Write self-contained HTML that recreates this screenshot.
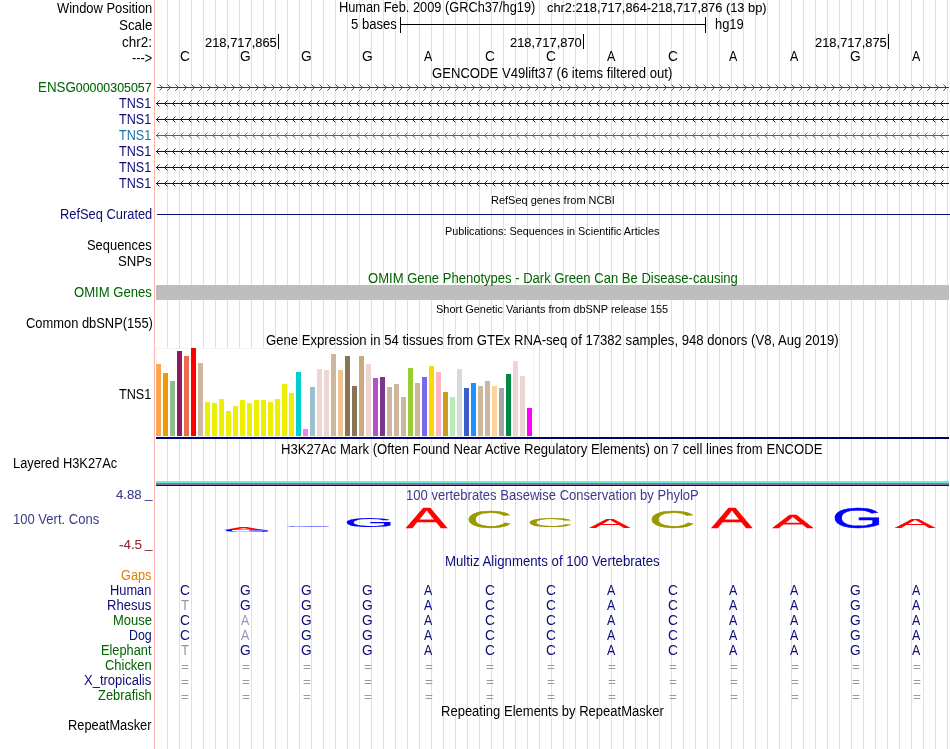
<!DOCTYPE html><html><head><meta charset="utf-8"><title>UCSC Genome Browser hg19 chr2:218,717,864-218,717,876</title><style>
html,body{margin:0;padding:0;background:#fff}
#w{will-change:transform;position:relative;width:950px;height:749px;overflow:hidden;background:#fff;font-family:"Liberation Sans", sans-serif;color:#000}
.t{position:absolute;white-space:pre;font-size:14px;line-height:14px;transform-origin:0 0}
.m{font-size:11px;line-height:11px}
.e{font-size:12px;line-height:12px}
.n{font-size:13px;line-height:13px;-webkit-text-stroke:0.09px}
.b{position:absolute}
</style></head><body><div id="w">
<div class="b" style="left:167px;top:0;width:783px;height:749px;background:repeating-linear-gradient(to right,#dcdcff 0,#dcdcff 1px,transparent 1px,transparent 12px)"></div>
<div class="b" style="left:154px;top:0;width:1px;height:749px;background:#ffb4b4"></div>
<div class="t" style="left:56.94px;top:1px;transform:scaleX(0.9208)">Window Position</div>
<div class="t" style="left:118.99px;top:18px;transform:scaleX(0.9537)">Scale</div>
<div class="t" style="left:122.33px;top:35px;transform:scaleX(0.9607)">chr2:</div>
<div class="t" style="left:131.54px;top:51px;transform:scaleX(0.9062)">---&gt;</div>
<div class="t" style="left:338.75px;top:0px;transform:scaleX(0.9137)">Human Feb. 2009 (GRCh37/hg19)</div>
<div class="t n" style="left:546.86px;top:1px;transform:scaleX(0.9862)">chr2:218,717,864-218,717,876 (13 bp)</div>
<div class="b" style="left:400px;top:24px;width:306px;height:1px;background:#000"></div>
<div class="b" style="left:400px;top:17px;width:1px;height:16px;background:#000"></div>
<div class="b" style="left:705px;top:17px;width:1px;height:16px;background:#000"></div>
<div class="t" style="left:350.68px;top:17px;transform:scaleX(0.9340)">5 bases</div>
<div class="t" style="left:714.81px;top:17px;transform:scaleX(0.9217)">hg19</div>
<div class="t n" style="left:204.55px;top:36px;transform:scaleX(0.9931)">218,717,865</div>
<div class="b" style="left:278px;top:34px;width:1px;height:15px;background:#000"></div>
<div class="t n" style="left:509.55px;top:36px;transform:scaleX(0.9925)">218,717,870</div>
<div class="b" style="left:583px;top:34px;width:1px;height:15px;background:#000"></div>
<div class="t n" style="left:814.55px;top:36px;transform:scaleX(0.9931)">218,717,875</div>
<div class="b" style="left:888px;top:34px;width:1px;height:15px;background:#000"></div>
<div class="t" style="left:179.56px;top:49px;transform:scaleX(0.9800)">C</div>
<div class="t" style="left:240.43px;top:49px;transform:scaleX(0.9800)">G</div>
<div class="t" style="left:301.43px;top:49px;transform:scaleX(0.9800)">G</div>
<div class="t" style="left:362.43px;top:49px;transform:scaleX(0.9800)">G</div>
<div class="t" style="left:424.44px;top:49px;transform:scaleX(0.8900)">A</div>
<div class="t" style="left:484.56px;top:49px;transform:scaleX(0.9800)">C</div>
<div class="t" style="left:545.56px;top:49px;transform:scaleX(0.9800)">C</div>
<div class="t" style="left:607.44px;top:49px;transform:scaleX(0.8900)">A</div>
<div class="t" style="left:667.56px;top:49px;transform:scaleX(0.9800)">C</div>
<div class="t" style="left:729.44px;top:49px;transform:scaleX(0.8900)">A</div>
<div class="t" style="left:790.44px;top:49px;transform:scaleX(0.8900)">A</div>
<div class="t" style="left:850.43px;top:49px;transform:scaleX(0.9800)">G</div>
<div class="t" style="left:912.44px;top:49px;transform:scaleX(0.8900)">A</div>
<div class="t" style="left:431.94px;top:66px;transform:scaleX(0.9362)">GENCODE V49lift37 (6 items filtered out)</div>
<div class="t" style="left:37.96px;top:80px;transform:scaleX(0.9527);color:#006400">ENSG<span class="n">00000305057</span></div>
<div class="b" style="left:157px;top:87px;width:792px;height:1px;background:#006400"></div>
<div class="t" style="left:118.72px;top:96px;transform:scaleX(0.8997);color:#0c0c78">TNS1</div>
<div class="b" style="left:156px;top:103px;width:793px;height:1px;background:#0c0c78"></div>
<div class="t" style="left:118.72px;top:112px;transform:scaleX(0.8997);color:#0c0c78">TNS1</div>
<div class="b" style="left:156px;top:119px;width:793px;height:1px;background:#0c0c78"></div>
<div class="t" style="left:118.72px;top:128px;transform:scaleX(0.8997);color:#1874ad">TNS1</div>
<div class="b" style="left:156px;top:135px;width:793px;height:1px;background:#1874ad"></div>
<div class="t" style="left:118.72px;top:144px;transform:scaleX(0.8997);color:#0c0c78">TNS1</div>
<div class="b" style="left:156px;top:151px;width:793px;height:1px;background:#0c0c78"></div>
<div class="t" style="left:118.72px;top:160px;transform:scaleX(0.8997);color:#0c0c78">TNS1</div>
<div class="b" style="left:156px;top:167px;width:793px;height:1px;background:#0c0c78"></div>
<div class="t" style="left:118.72px;top:176px;transform:scaleX(0.8997);color:#0c0c78">TNS1</div>
<div class="b" style="left:156px;top:183px;width:793px;height:1px;background:#0c0c78"></div>
<svg class="b" style="left:0;top:0" width="950" height="749" viewBox="0 0 950 749" fill="none" stroke-width="0.9"><path d="M159.5 84.5L162.5 87.5L159.5 90.5M167.5 84.5L170.5 87.5L167.5 90.5M175.5 84.5L178.5 87.5L175.5 90.5M183.5 84.5L186.5 87.5L183.5 90.5M191.5 84.5L194.5 87.5L191.5 90.5M199.5 84.5L202.5 87.5L199.5 90.5M207.5 84.5L210.5 87.5L207.5 90.5M215.5 84.5L218.5 87.5L215.5 90.5M223.5 84.5L226.5 87.5L223.5 90.5M231.5 84.5L234.5 87.5L231.5 90.5M239.5 84.5L242.5 87.5L239.5 90.5M247.5 84.5L250.5 87.5L247.5 90.5M255.5 84.5L258.5 87.5L255.5 90.5M263.5 84.5L266.5 87.5L263.5 90.5M271.5 84.5L274.5 87.5L271.5 90.5M279.5 84.5L282.5 87.5L279.5 90.5M287.5 84.5L290.5 87.5L287.5 90.5M295.5 84.5L298.5 87.5L295.5 90.5M303.5 84.5L306.5 87.5L303.5 90.5M311.5 84.5L314.5 87.5L311.5 90.5M319.5 84.5L322.5 87.5L319.5 90.5M327.5 84.5L330.5 87.5L327.5 90.5M335.5 84.5L338.5 87.5L335.5 90.5M343.5 84.5L346.5 87.5L343.5 90.5M351.5 84.5L354.5 87.5L351.5 90.5M359.5 84.5L362.5 87.5L359.5 90.5M367.5 84.5L370.5 87.5L367.5 90.5M375.5 84.5L378.5 87.5L375.5 90.5M383.5 84.5L386.5 87.5L383.5 90.5M391.5 84.5L394.5 87.5L391.5 90.5M399.5 84.5L402.5 87.5L399.5 90.5M407.5 84.5L410.5 87.5L407.5 90.5M415.5 84.5L418.5 87.5L415.5 90.5M423.5 84.5L426.5 87.5L423.5 90.5M431.5 84.5L434.5 87.5L431.5 90.5M439.5 84.5L442.5 87.5L439.5 90.5M447.5 84.5L450.5 87.5L447.5 90.5M455.5 84.5L458.5 87.5L455.5 90.5M463.5 84.5L466.5 87.5L463.5 90.5M471.5 84.5L474.5 87.5L471.5 90.5M479.5 84.5L482.5 87.5L479.5 90.5M487.5 84.5L490.5 87.5L487.5 90.5M495.5 84.5L498.5 87.5L495.5 90.5M503.5 84.5L506.5 87.5L503.5 90.5M511.5 84.5L514.5 87.5L511.5 90.5M519.5 84.5L522.5 87.5L519.5 90.5M527.5 84.5L530.5 87.5L527.5 90.5M535.5 84.5L538.5 87.5L535.5 90.5M543.5 84.5L546.5 87.5L543.5 90.5M551.5 84.5L554.5 87.5L551.5 90.5M559.5 84.5L562.5 87.5L559.5 90.5M567.5 84.5L570.5 87.5L567.5 90.5M575.5 84.5L578.5 87.5L575.5 90.5M583.5 84.5L586.5 87.5L583.5 90.5M591.5 84.5L594.5 87.5L591.5 90.5M599.5 84.5L602.5 87.5L599.5 90.5M607.5 84.5L610.5 87.5L607.5 90.5M615.5 84.5L618.5 87.5L615.5 90.5M623.5 84.5L626.5 87.5L623.5 90.5M631.5 84.5L634.5 87.5L631.5 90.5M639.5 84.5L642.5 87.5L639.5 90.5M647.5 84.5L650.5 87.5L647.5 90.5M655.5 84.5L658.5 87.5L655.5 90.5M663.5 84.5L666.5 87.5L663.5 90.5M671.5 84.5L674.5 87.5L671.5 90.5M679.5 84.5L682.5 87.5L679.5 90.5M687.5 84.5L690.5 87.5L687.5 90.5M695.5 84.5L698.5 87.5L695.5 90.5M703.5 84.5L706.5 87.5L703.5 90.5M711.5 84.5L714.5 87.5L711.5 90.5M719.5 84.5L722.5 87.5L719.5 90.5M727.5 84.5L730.5 87.5L727.5 90.5M735.5 84.5L738.5 87.5L735.5 90.5M743.5 84.5L746.5 87.5L743.5 90.5M751.5 84.5L754.5 87.5L751.5 90.5M759.5 84.5L762.5 87.5L759.5 90.5M767.5 84.5L770.5 87.5L767.5 90.5M775.5 84.5L778.5 87.5L775.5 90.5M783.5 84.5L786.5 87.5L783.5 90.5M791.5 84.5L794.5 87.5L791.5 90.5M799.5 84.5L802.5 87.5L799.5 90.5M807.5 84.5L810.5 87.5L807.5 90.5M815.5 84.5L818.5 87.5L815.5 90.5M823.5 84.5L826.5 87.5L823.5 90.5M831.5 84.5L834.5 87.5L831.5 90.5M839.5 84.5L842.5 87.5L839.5 90.5M847.5 84.5L850.5 87.5L847.5 90.5M855.5 84.5L858.5 87.5L855.5 90.5M863.5 84.5L866.5 87.5L863.5 90.5M871.5 84.5L874.5 87.5L871.5 90.5M879.5 84.5L882.5 87.5L879.5 90.5M887.5 84.5L890.5 87.5L887.5 90.5M895.5 84.5L898.5 87.5L895.5 90.5M903.5 84.5L906.5 87.5L903.5 90.5M911.5 84.5L914.5 87.5L911.5 90.5M919.5 84.5L922.5 87.5L919.5 90.5M927.5 84.5L930.5 87.5L927.5 90.5M935.5 84.5L938.5 87.5L935.5 90.5M943.5 84.5L946.5 87.5L943.5 90.5" stroke="#006400"/><path d="M159.5 100.5L156.5 103.5L159.5 106.5M167.5 100.5L164.5 103.5L167.5 106.5M175.5 100.5L172.5 103.5L175.5 106.5M183.5 100.5L180.5 103.5L183.5 106.5M191.5 100.5L188.5 103.5L191.5 106.5M199.5 100.5L196.5 103.5L199.5 106.5M207.5 100.5L204.5 103.5L207.5 106.5M215.5 100.5L212.5 103.5L215.5 106.5M223.5 100.5L220.5 103.5L223.5 106.5M231.5 100.5L228.5 103.5L231.5 106.5M239.5 100.5L236.5 103.5L239.5 106.5M247.5 100.5L244.5 103.5L247.5 106.5M255.5 100.5L252.5 103.5L255.5 106.5M263.5 100.5L260.5 103.5L263.5 106.5M271.5 100.5L268.5 103.5L271.5 106.5M279.5 100.5L276.5 103.5L279.5 106.5M287.5 100.5L284.5 103.5L287.5 106.5M295.5 100.5L292.5 103.5L295.5 106.5M303.5 100.5L300.5 103.5L303.5 106.5M311.5 100.5L308.5 103.5L311.5 106.5M319.5 100.5L316.5 103.5L319.5 106.5M327.5 100.5L324.5 103.5L327.5 106.5M335.5 100.5L332.5 103.5L335.5 106.5M343.5 100.5L340.5 103.5L343.5 106.5M351.5 100.5L348.5 103.5L351.5 106.5M359.5 100.5L356.5 103.5L359.5 106.5M367.5 100.5L364.5 103.5L367.5 106.5M375.5 100.5L372.5 103.5L375.5 106.5M383.5 100.5L380.5 103.5L383.5 106.5M391.5 100.5L388.5 103.5L391.5 106.5M399.5 100.5L396.5 103.5L399.5 106.5M407.5 100.5L404.5 103.5L407.5 106.5M415.5 100.5L412.5 103.5L415.5 106.5M423.5 100.5L420.5 103.5L423.5 106.5M431.5 100.5L428.5 103.5L431.5 106.5M439.5 100.5L436.5 103.5L439.5 106.5M447.5 100.5L444.5 103.5L447.5 106.5M455.5 100.5L452.5 103.5L455.5 106.5M463.5 100.5L460.5 103.5L463.5 106.5M471.5 100.5L468.5 103.5L471.5 106.5M479.5 100.5L476.5 103.5L479.5 106.5M487.5 100.5L484.5 103.5L487.5 106.5M495.5 100.5L492.5 103.5L495.5 106.5M503.5 100.5L500.5 103.5L503.5 106.5M511.5 100.5L508.5 103.5L511.5 106.5M519.5 100.5L516.5 103.5L519.5 106.5M527.5 100.5L524.5 103.5L527.5 106.5M535.5 100.5L532.5 103.5L535.5 106.5M543.5 100.5L540.5 103.5L543.5 106.5M551.5 100.5L548.5 103.5L551.5 106.5M559.5 100.5L556.5 103.5L559.5 106.5M567.5 100.5L564.5 103.5L567.5 106.5M575.5 100.5L572.5 103.5L575.5 106.5M583.5 100.5L580.5 103.5L583.5 106.5M591.5 100.5L588.5 103.5L591.5 106.5M599.5 100.5L596.5 103.5L599.5 106.5M607.5 100.5L604.5 103.5L607.5 106.5M615.5 100.5L612.5 103.5L615.5 106.5M623.5 100.5L620.5 103.5L623.5 106.5M631.5 100.5L628.5 103.5L631.5 106.5M639.5 100.5L636.5 103.5L639.5 106.5M647.5 100.5L644.5 103.5L647.5 106.5M655.5 100.5L652.5 103.5L655.5 106.5M663.5 100.5L660.5 103.5L663.5 106.5M671.5 100.5L668.5 103.5L671.5 106.5M679.5 100.5L676.5 103.5L679.5 106.5M687.5 100.5L684.5 103.5L687.5 106.5M695.5 100.5L692.5 103.5L695.5 106.5M703.5 100.5L700.5 103.5L703.5 106.5M711.5 100.5L708.5 103.5L711.5 106.5M719.5 100.5L716.5 103.5L719.5 106.5M727.5 100.5L724.5 103.5L727.5 106.5M735.5 100.5L732.5 103.5L735.5 106.5M743.5 100.5L740.5 103.5L743.5 106.5M751.5 100.5L748.5 103.5L751.5 106.5M759.5 100.5L756.5 103.5L759.5 106.5M767.5 100.5L764.5 103.5L767.5 106.5M775.5 100.5L772.5 103.5L775.5 106.5M783.5 100.5L780.5 103.5L783.5 106.5M791.5 100.5L788.5 103.5L791.5 106.5M799.5 100.5L796.5 103.5L799.5 106.5M807.5 100.5L804.5 103.5L807.5 106.5M815.5 100.5L812.5 103.5L815.5 106.5M823.5 100.5L820.5 103.5L823.5 106.5M831.5 100.5L828.5 103.5L831.5 106.5M839.5 100.5L836.5 103.5L839.5 106.5M847.5 100.5L844.5 103.5L847.5 106.5M855.5 100.5L852.5 103.5L855.5 106.5M863.5 100.5L860.5 103.5L863.5 106.5M871.5 100.5L868.5 103.5L871.5 106.5M879.5 100.5L876.5 103.5L879.5 106.5M887.5 100.5L884.5 103.5L887.5 106.5M895.5 100.5L892.5 103.5L895.5 106.5M903.5 100.5L900.5 103.5L903.5 106.5M911.5 100.5L908.5 103.5L911.5 106.5M919.5 100.5L916.5 103.5L919.5 106.5M927.5 100.5L924.5 103.5L927.5 106.5M935.5 100.5L932.5 103.5L935.5 106.5M943.5 100.5L940.5 103.5L943.5 106.5" stroke="#0c0c78"/><path d="M159.5 116.5L156.5 119.5L159.5 122.5M167.5 116.5L164.5 119.5L167.5 122.5M175.5 116.5L172.5 119.5L175.5 122.5M183.5 116.5L180.5 119.5L183.5 122.5M191.5 116.5L188.5 119.5L191.5 122.5M199.5 116.5L196.5 119.5L199.5 122.5M207.5 116.5L204.5 119.5L207.5 122.5M215.5 116.5L212.5 119.5L215.5 122.5M223.5 116.5L220.5 119.5L223.5 122.5M231.5 116.5L228.5 119.5L231.5 122.5M239.5 116.5L236.5 119.5L239.5 122.5M247.5 116.5L244.5 119.5L247.5 122.5M255.5 116.5L252.5 119.5L255.5 122.5M263.5 116.5L260.5 119.5L263.5 122.5M271.5 116.5L268.5 119.5L271.5 122.5M279.5 116.5L276.5 119.5L279.5 122.5M287.5 116.5L284.5 119.5L287.5 122.5M295.5 116.5L292.5 119.5L295.5 122.5M303.5 116.5L300.5 119.5L303.5 122.5M311.5 116.5L308.5 119.5L311.5 122.5M319.5 116.5L316.5 119.5L319.5 122.5M327.5 116.5L324.5 119.5L327.5 122.5M335.5 116.5L332.5 119.5L335.5 122.5M343.5 116.5L340.5 119.5L343.5 122.5M351.5 116.5L348.5 119.5L351.5 122.5M359.5 116.5L356.5 119.5L359.5 122.5M367.5 116.5L364.5 119.5L367.5 122.5M375.5 116.5L372.5 119.5L375.5 122.5M383.5 116.5L380.5 119.5L383.5 122.5M391.5 116.5L388.5 119.5L391.5 122.5M399.5 116.5L396.5 119.5L399.5 122.5M407.5 116.5L404.5 119.5L407.5 122.5M415.5 116.5L412.5 119.5L415.5 122.5M423.5 116.5L420.5 119.5L423.5 122.5M431.5 116.5L428.5 119.5L431.5 122.5M439.5 116.5L436.5 119.5L439.5 122.5M447.5 116.5L444.5 119.5L447.5 122.5M455.5 116.5L452.5 119.5L455.5 122.5M463.5 116.5L460.5 119.5L463.5 122.5M471.5 116.5L468.5 119.5L471.5 122.5M479.5 116.5L476.5 119.5L479.5 122.5M487.5 116.5L484.5 119.5L487.5 122.5M495.5 116.5L492.5 119.5L495.5 122.5M503.5 116.5L500.5 119.5L503.5 122.5M511.5 116.5L508.5 119.5L511.5 122.5M519.5 116.5L516.5 119.5L519.5 122.5M527.5 116.5L524.5 119.5L527.5 122.5M535.5 116.5L532.5 119.5L535.5 122.5M543.5 116.5L540.5 119.5L543.5 122.5M551.5 116.5L548.5 119.5L551.5 122.5M559.5 116.5L556.5 119.5L559.5 122.5M567.5 116.5L564.5 119.5L567.5 122.5M575.5 116.5L572.5 119.5L575.5 122.5M583.5 116.5L580.5 119.5L583.5 122.5M591.5 116.5L588.5 119.5L591.5 122.5M599.5 116.5L596.5 119.5L599.5 122.5M607.5 116.5L604.5 119.5L607.5 122.5M615.5 116.5L612.5 119.5L615.5 122.5M623.5 116.5L620.5 119.5L623.5 122.5M631.5 116.5L628.5 119.5L631.5 122.5M639.5 116.5L636.5 119.5L639.5 122.5M647.5 116.5L644.5 119.5L647.5 122.5M655.5 116.5L652.5 119.5L655.5 122.5M663.5 116.5L660.5 119.5L663.5 122.5M671.5 116.5L668.5 119.5L671.5 122.5M679.5 116.5L676.5 119.5L679.5 122.5M687.5 116.5L684.5 119.5L687.5 122.5M695.5 116.5L692.5 119.5L695.5 122.5M703.5 116.5L700.5 119.5L703.5 122.5M711.5 116.5L708.5 119.5L711.5 122.5M719.5 116.5L716.5 119.5L719.5 122.5M727.5 116.5L724.5 119.5L727.5 122.5M735.5 116.5L732.5 119.5L735.5 122.5M743.5 116.5L740.5 119.5L743.5 122.5M751.5 116.5L748.5 119.5L751.5 122.5M759.5 116.5L756.5 119.5L759.5 122.5M767.5 116.5L764.5 119.5L767.5 122.5M775.5 116.5L772.5 119.5L775.5 122.5M783.5 116.5L780.5 119.5L783.5 122.5M791.5 116.5L788.5 119.5L791.5 122.5M799.5 116.5L796.5 119.5L799.5 122.5M807.5 116.5L804.5 119.5L807.5 122.5M815.5 116.5L812.5 119.5L815.5 122.5M823.5 116.5L820.5 119.5L823.5 122.5M831.5 116.5L828.5 119.5L831.5 122.5M839.5 116.5L836.5 119.5L839.5 122.5M847.5 116.5L844.5 119.5L847.5 122.5M855.5 116.5L852.5 119.5L855.5 122.5M863.5 116.5L860.5 119.5L863.5 122.5M871.5 116.5L868.5 119.5L871.5 122.5M879.5 116.5L876.5 119.5L879.5 122.5M887.5 116.5L884.5 119.5L887.5 122.5M895.5 116.5L892.5 119.5L895.5 122.5M903.5 116.5L900.5 119.5L903.5 122.5M911.5 116.5L908.5 119.5L911.5 122.5M919.5 116.5L916.5 119.5L919.5 122.5M927.5 116.5L924.5 119.5L927.5 122.5M935.5 116.5L932.5 119.5L935.5 122.5M943.5 116.5L940.5 119.5L943.5 122.5" stroke="#0c0c78"/><path d="M159.5 132.5L156.5 135.5L159.5 138.5M167.5 132.5L164.5 135.5L167.5 138.5M175.5 132.5L172.5 135.5L175.5 138.5M183.5 132.5L180.5 135.5L183.5 138.5M191.5 132.5L188.5 135.5L191.5 138.5M199.5 132.5L196.5 135.5L199.5 138.5M207.5 132.5L204.5 135.5L207.5 138.5M215.5 132.5L212.5 135.5L215.5 138.5M223.5 132.5L220.5 135.5L223.5 138.5M231.5 132.5L228.5 135.5L231.5 138.5M239.5 132.5L236.5 135.5L239.5 138.5M247.5 132.5L244.5 135.5L247.5 138.5M255.5 132.5L252.5 135.5L255.5 138.5M263.5 132.5L260.5 135.5L263.5 138.5M271.5 132.5L268.5 135.5L271.5 138.5M279.5 132.5L276.5 135.5L279.5 138.5M287.5 132.5L284.5 135.5L287.5 138.5M295.5 132.5L292.5 135.5L295.5 138.5M303.5 132.5L300.5 135.5L303.5 138.5M311.5 132.5L308.5 135.5L311.5 138.5M319.5 132.5L316.5 135.5L319.5 138.5M327.5 132.5L324.5 135.5L327.5 138.5M335.5 132.5L332.5 135.5L335.5 138.5M343.5 132.5L340.5 135.5L343.5 138.5M351.5 132.5L348.5 135.5L351.5 138.5M359.5 132.5L356.5 135.5L359.5 138.5M367.5 132.5L364.5 135.5L367.5 138.5M375.5 132.5L372.5 135.5L375.5 138.5M383.5 132.5L380.5 135.5L383.5 138.5M391.5 132.5L388.5 135.5L391.5 138.5M399.5 132.5L396.5 135.5L399.5 138.5M407.5 132.5L404.5 135.5L407.5 138.5M415.5 132.5L412.5 135.5L415.5 138.5M423.5 132.5L420.5 135.5L423.5 138.5M431.5 132.5L428.5 135.5L431.5 138.5M439.5 132.5L436.5 135.5L439.5 138.5M447.5 132.5L444.5 135.5L447.5 138.5M455.5 132.5L452.5 135.5L455.5 138.5M463.5 132.5L460.5 135.5L463.5 138.5M471.5 132.5L468.5 135.5L471.5 138.5M479.5 132.5L476.5 135.5L479.5 138.5M487.5 132.5L484.5 135.5L487.5 138.5M495.5 132.5L492.5 135.5L495.5 138.5M503.5 132.5L500.5 135.5L503.5 138.5M511.5 132.5L508.5 135.5L511.5 138.5M519.5 132.5L516.5 135.5L519.5 138.5M527.5 132.5L524.5 135.5L527.5 138.5M535.5 132.5L532.5 135.5L535.5 138.5M543.5 132.5L540.5 135.5L543.5 138.5M551.5 132.5L548.5 135.5L551.5 138.5M559.5 132.5L556.5 135.5L559.5 138.5M567.5 132.5L564.5 135.5L567.5 138.5M575.5 132.5L572.5 135.5L575.5 138.5M583.5 132.5L580.5 135.5L583.5 138.5M591.5 132.5L588.5 135.5L591.5 138.5M599.5 132.5L596.5 135.5L599.5 138.5M607.5 132.5L604.5 135.5L607.5 138.5M615.5 132.5L612.5 135.5L615.5 138.5M623.5 132.5L620.5 135.5L623.5 138.5M631.5 132.5L628.5 135.5L631.5 138.5M639.5 132.5L636.5 135.5L639.5 138.5M647.5 132.5L644.5 135.5L647.5 138.5M655.5 132.5L652.5 135.5L655.5 138.5M663.5 132.5L660.5 135.5L663.5 138.5M671.5 132.5L668.5 135.5L671.5 138.5M679.5 132.5L676.5 135.5L679.5 138.5M687.5 132.5L684.5 135.5L687.5 138.5M695.5 132.5L692.5 135.5L695.5 138.5M703.5 132.5L700.5 135.5L703.5 138.5M711.5 132.5L708.5 135.5L711.5 138.5M719.5 132.5L716.5 135.5L719.5 138.5M727.5 132.5L724.5 135.5L727.5 138.5M735.5 132.5L732.5 135.5L735.5 138.5M743.5 132.5L740.5 135.5L743.5 138.5M751.5 132.5L748.5 135.5L751.5 138.5M759.5 132.5L756.5 135.5L759.5 138.5M767.5 132.5L764.5 135.5L767.5 138.5M775.5 132.5L772.5 135.5L775.5 138.5M783.5 132.5L780.5 135.5L783.5 138.5M791.5 132.5L788.5 135.5L791.5 138.5M799.5 132.5L796.5 135.5L799.5 138.5M807.5 132.5L804.5 135.5L807.5 138.5M815.5 132.5L812.5 135.5L815.5 138.5M823.5 132.5L820.5 135.5L823.5 138.5M831.5 132.5L828.5 135.5L831.5 138.5M839.5 132.5L836.5 135.5L839.5 138.5M847.5 132.5L844.5 135.5L847.5 138.5M855.5 132.5L852.5 135.5L855.5 138.5M863.5 132.5L860.5 135.5L863.5 138.5M871.5 132.5L868.5 135.5L871.5 138.5M879.5 132.5L876.5 135.5L879.5 138.5M887.5 132.5L884.5 135.5L887.5 138.5M895.5 132.5L892.5 135.5L895.5 138.5M903.5 132.5L900.5 135.5L903.5 138.5M911.5 132.5L908.5 135.5L911.5 138.5M919.5 132.5L916.5 135.5L919.5 138.5M927.5 132.5L924.5 135.5L927.5 138.5M935.5 132.5L932.5 135.5L935.5 138.5M943.5 132.5L940.5 135.5L943.5 138.5" stroke="#1874ad"/><path d="M159.5 148.5L156.5 151.5L159.5 154.5M167.5 148.5L164.5 151.5L167.5 154.5M175.5 148.5L172.5 151.5L175.5 154.5M183.5 148.5L180.5 151.5L183.5 154.5M191.5 148.5L188.5 151.5L191.5 154.5M199.5 148.5L196.5 151.5L199.5 154.5M207.5 148.5L204.5 151.5L207.5 154.5M215.5 148.5L212.5 151.5L215.5 154.5M223.5 148.5L220.5 151.5L223.5 154.5M231.5 148.5L228.5 151.5L231.5 154.5M239.5 148.5L236.5 151.5L239.5 154.5M247.5 148.5L244.5 151.5L247.5 154.5M255.5 148.5L252.5 151.5L255.5 154.5M263.5 148.5L260.5 151.5L263.5 154.5M271.5 148.5L268.5 151.5L271.5 154.5M279.5 148.5L276.5 151.5L279.5 154.5M287.5 148.5L284.5 151.5L287.5 154.5M295.5 148.5L292.5 151.5L295.5 154.5M303.5 148.5L300.5 151.5L303.5 154.5M311.5 148.5L308.5 151.5L311.5 154.5M319.5 148.5L316.5 151.5L319.5 154.5M327.5 148.5L324.5 151.5L327.5 154.5M335.5 148.5L332.5 151.5L335.5 154.5M343.5 148.5L340.5 151.5L343.5 154.5M351.5 148.5L348.5 151.5L351.5 154.5M359.5 148.5L356.5 151.5L359.5 154.5M367.5 148.5L364.5 151.5L367.5 154.5M375.5 148.5L372.5 151.5L375.5 154.5M383.5 148.5L380.5 151.5L383.5 154.5M391.5 148.5L388.5 151.5L391.5 154.5M399.5 148.5L396.5 151.5L399.5 154.5M407.5 148.5L404.5 151.5L407.5 154.5M415.5 148.5L412.5 151.5L415.5 154.5M423.5 148.5L420.5 151.5L423.5 154.5M431.5 148.5L428.5 151.5L431.5 154.5M439.5 148.5L436.5 151.5L439.5 154.5M447.5 148.5L444.5 151.5L447.5 154.5M455.5 148.5L452.5 151.5L455.5 154.5M463.5 148.5L460.5 151.5L463.5 154.5M471.5 148.5L468.5 151.5L471.5 154.5M479.5 148.5L476.5 151.5L479.5 154.5M487.5 148.5L484.5 151.5L487.5 154.5M495.5 148.5L492.5 151.5L495.5 154.5M503.5 148.5L500.5 151.5L503.5 154.5M511.5 148.5L508.5 151.5L511.5 154.5M519.5 148.5L516.5 151.5L519.5 154.5M527.5 148.5L524.5 151.5L527.5 154.5M535.5 148.5L532.5 151.5L535.5 154.5M543.5 148.5L540.5 151.5L543.5 154.5M551.5 148.5L548.5 151.5L551.5 154.5M559.5 148.5L556.5 151.5L559.5 154.5M567.5 148.5L564.5 151.5L567.5 154.5M575.5 148.5L572.5 151.5L575.5 154.5M583.5 148.5L580.5 151.5L583.5 154.5M591.5 148.5L588.5 151.5L591.5 154.5M599.5 148.5L596.5 151.5L599.5 154.5M607.5 148.5L604.5 151.5L607.5 154.5M615.5 148.5L612.5 151.5L615.5 154.5M623.5 148.5L620.5 151.5L623.5 154.5M631.5 148.5L628.5 151.5L631.5 154.5M639.5 148.5L636.5 151.5L639.5 154.5M647.5 148.5L644.5 151.5L647.5 154.5M655.5 148.5L652.5 151.5L655.5 154.5M663.5 148.5L660.5 151.5L663.5 154.5M671.5 148.5L668.5 151.5L671.5 154.5M679.5 148.5L676.5 151.5L679.5 154.5M687.5 148.5L684.5 151.5L687.5 154.5M695.5 148.5L692.5 151.5L695.5 154.5M703.5 148.5L700.5 151.5L703.5 154.5M711.5 148.5L708.5 151.5L711.5 154.5M719.5 148.5L716.5 151.5L719.5 154.5M727.5 148.5L724.5 151.5L727.5 154.5M735.5 148.5L732.5 151.5L735.5 154.5M743.5 148.5L740.5 151.5L743.5 154.5M751.5 148.5L748.5 151.5L751.5 154.5M759.5 148.5L756.5 151.5L759.5 154.5M767.5 148.5L764.5 151.5L767.5 154.5M775.5 148.5L772.5 151.5L775.5 154.5M783.5 148.5L780.5 151.5L783.5 154.5M791.5 148.5L788.5 151.5L791.5 154.5M799.5 148.5L796.5 151.5L799.5 154.5M807.5 148.5L804.5 151.5L807.5 154.5M815.5 148.5L812.5 151.5L815.5 154.5M823.5 148.5L820.5 151.5L823.5 154.5M831.5 148.5L828.5 151.5L831.5 154.5M839.5 148.5L836.5 151.5L839.5 154.5M847.5 148.5L844.5 151.5L847.5 154.5M855.5 148.5L852.5 151.5L855.5 154.5M863.5 148.5L860.5 151.5L863.5 154.5M871.5 148.5L868.5 151.5L871.5 154.5M879.5 148.5L876.5 151.5L879.5 154.5M887.5 148.5L884.5 151.5L887.5 154.5M895.5 148.5L892.5 151.5L895.5 154.5M903.5 148.5L900.5 151.5L903.5 154.5M911.5 148.5L908.5 151.5L911.5 154.5M919.5 148.5L916.5 151.5L919.5 154.5M927.5 148.5L924.5 151.5L927.5 154.5M935.5 148.5L932.5 151.5L935.5 154.5M943.5 148.5L940.5 151.5L943.5 154.5" stroke="#0c0c78"/><path d="M159.5 164.5L156.5 167.5L159.5 170.5M167.5 164.5L164.5 167.5L167.5 170.5M175.5 164.5L172.5 167.5L175.5 170.5M183.5 164.5L180.5 167.5L183.5 170.5M191.5 164.5L188.5 167.5L191.5 170.5M199.5 164.5L196.5 167.5L199.5 170.5M207.5 164.5L204.5 167.5L207.5 170.5M215.5 164.5L212.5 167.5L215.5 170.5M223.5 164.5L220.5 167.5L223.5 170.5M231.5 164.5L228.5 167.5L231.5 170.5M239.5 164.5L236.5 167.5L239.5 170.5M247.5 164.5L244.5 167.5L247.5 170.5M255.5 164.5L252.5 167.5L255.5 170.5M263.5 164.5L260.5 167.5L263.5 170.5M271.5 164.5L268.5 167.5L271.5 170.5M279.5 164.5L276.5 167.5L279.5 170.5M287.5 164.5L284.5 167.5L287.5 170.5M295.5 164.5L292.5 167.5L295.5 170.5M303.5 164.5L300.5 167.5L303.5 170.5M311.5 164.5L308.5 167.5L311.5 170.5M319.5 164.5L316.5 167.5L319.5 170.5M327.5 164.5L324.5 167.5L327.5 170.5M335.5 164.5L332.5 167.5L335.5 170.5M343.5 164.5L340.5 167.5L343.5 170.5M351.5 164.5L348.5 167.5L351.5 170.5M359.5 164.5L356.5 167.5L359.5 170.5M367.5 164.5L364.5 167.5L367.5 170.5M375.5 164.5L372.5 167.5L375.5 170.5M383.5 164.5L380.5 167.5L383.5 170.5M391.5 164.5L388.5 167.5L391.5 170.5M399.5 164.5L396.5 167.5L399.5 170.5M407.5 164.5L404.5 167.5L407.5 170.5M415.5 164.5L412.5 167.5L415.5 170.5M423.5 164.5L420.5 167.5L423.5 170.5M431.5 164.5L428.5 167.5L431.5 170.5M439.5 164.5L436.5 167.5L439.5 170.5M447.5 164.5L444.5 167.5L447.5 170.5M455.5 164.5L452.5 167.5L455.5 170.5M463.5 164.5L460.5 167.5L463.5 170.5M471.5 164.5L468.5 167.5L471.5 170.5M479.5 164.5L476.5 167.5L479.5 170.5M487.5 164.5L484.5 167.5L487.5 170.5M495.5 164.5L492.5 167.5L495.5 170.5M503.5 164.5L500.5 167.5L503.5 170.5M511.5 164.5L508.5 167.5L511.5 170.5M519.5 164.5L516.5 167.5L519.5 170.5M527.5 164.5L524.5 167.5L527.5 170.5M535.5 164.5L532.5 167.5L535.5 170.5M543.5 164.5L540.5 167.5L543.5 170.5M551.5 164.5L548.5 167.5L551.5 170.5M559.5 164.5L556.5 167.5L559.5 170.5M567.5 164.5L564.5 167.5L567.5 170.5M575.5 164.5L572.5 167.5L575.5 170.5M583.5 164.5L580.5 167.5L583.5 170.5M591.5 164.5L588.5 167.5L591.5 170.5M599.5 164.5L596.5 167.5L599.5 170.5M607.5 164.5L604.5 167.5L607.5 170.5M615.5 164.5L612.5 167.5L615.5 170.5M623.5 164.5L620.5 167.5L623.5 170.5M631.5 164.5L628.5 167.5L631.5 170.5M639.5 164.5L636.5 167.5L639.5 170.5M647.5 164.5L644.5 167.5L647.5 170.5M655.5 164.5L652.5 167.5L655.5 170.5M663.5 164.5L660.5 167.5L663.5 170.5M671.5 164.5L668.5 167.5L671.5 170.5M679.5 164.5L676.5 167.5L679.5 170.5M687.5 164.5L684.5 167.5L687.5 170.5M695.5 164.5L692.5 167.5L695.5 170.5M703.5 164.5L700.5 167.5L703.5 170.5M711.5 164.5L708.5 167.5L711.5 170.5M719.5 164.5L716.5 167.5L719.5 170.5M727.5 164.5L724.5 167.5L727.5 170.5M735.5 164.5L732.5 167.5L735.5 170.5M743.5 164.5L740.5 167.5L743.5 170.5M751.5 164.5L748.5 167.5L751.5 170.5M759.5 164.5L756.5 167.5L759.5 170.5M767.5 164.5L764.5 167.5L767.5 170.5M775.5 164.5L772.5 167.5L775.5 170.5M783.5 164.5L780.5 167.5L783.5 170.5M791.5 164.5L788.5 167.5L791.5 170.5M799.5 164.5L796.5 167.5L799.5 170.5M807.5 164.5L804.5 167.5L807.5 170.5M815.5 164.5L812.5 167.5L815.5 170.5M823.5 164.5L820.5 167.5L823.5 170.5M831.5 164.5L828.5 167.5L831.5 170.5M839.5 164.5L836.5 167.5L839.5 170.5M847.5 164.5L844.5 167.5L847.5 170.5M855.5 164.5L852.5 167.5L855.5 170.5M863.5 164.5L860.5 167.5L863.5 170.5M871.5 164.5L868.5 167.5L871.5 170.5M879.5 164.5L876.5 167.5L879.5 170.5M887.5 164.5L884.5 167.5L887.5 170.5M895.5 164.5L892.5 167.5L895.5 170.5M903.5 164.5L900.5 167.5L903.5 170.5M911.5 164.5L908.5 167.5L911.5 170.5M919.5 164.5L916.5 167.5L919.5 170.5M927.5 164.5L924.5 167.5L927.5 170.5M935.5 164.5L932.5 167.5L935.5 170.5M943.5 164.5L940.5 167.5L943.5 170.5" stroke="#0c0c78"/><path d="M159.5 180.5L156.5 183.5L159.5 186.5M167.5 180.5L164.5 183.5L167.5 186.5M175.5 180.5L172.5 183.5L175.5 186.5M183.5 180.5L180.5 183.5L183.5 186.5M191.5 180.5L188.5 183.5L191.5 186.5M199.5 180.5L196.5 183.5L199.5 186.5M207.5 180.5L204.5 183.5L207.5 186.5M215.5 180.5L212.5 183.5L215.5 186.5M223.5 180.5L220.5 183.5L223.5 186.5M231.5 180.5L228.5 183.5L231.5 186.5M239.5 180.5L236.5 183.5L239.5 186.5M247.5 180.5L244.5 183.5L247.5 186.5M255.5 180.5L252.5 183.5L255.5 186.5M263.5 180.5L260.5 183.5L263.5 186.5M271.5 180.5L268.5 183.5L271.5 186.5M279.5 180.5L276.5 183.5L279.5 186.5M287.5 180.5L284.5 183.5L287.5 186.5M295.5 180.5L292.5 183.5L295.5 186.5M303.5 180.5L300.5 183.5L303.5 186.5M311.5 180.5L308.5 183.5L311.5 186.5M319.5 180.5L316.5 183.5L319.5 186.5M327.5 180.5L324.5 183.5L327.5 186.5M335.5 180.5L332.5 183.5L335.5 186.5M343.5 180.5L340.5 183.5L343.5 186.5M351.5 180.5L348.5 183.5L351.5 186.5M359.5 180.5L356.5 183.5L359.5 186.5M367.5 180.5L364.5 183.5L367.5 186.5M375.5 180.5L372.5 183.5L375.5 186.5M383.5 180.5L380.5 183.5L383.5 186.5M391.5 180.5L388.5 183.5L391.5 186.5M399.5 180.5L396.5 183.5L399.5 186.5M407.5 180.5L404.5 183.5L407.5 186.5M415.5 180.5L412.5 183.5L415.5 186.5M423.5 180.5L420.5 183.5L423.5 186.5M431.5 180.5L428.5 183.5L431.5 186.5M439.5 180.5L436.5 183.5L439.5 186.5M447.5 180.5L444.5 183.5L447.5 186.5M455.5 180.5L452.5 183.5L455.5 186.5M463.5 180.5L460.5 183.5L463.5 186.5M471.5 180.5L468.5 183.5L471.5 186.5M479.5 180.5L476.5 183.5L479.5 186.5M487.5 180.5L484.5 183.5L487.5 186.5M495.5 180.5L492.5 183.5L495.5 186.5M503.5 180.5L500.5 183.5L503.5 186.5M511.5 180.5L508.5 183.5L511.5 186.5M519.5 180.5L516.5 183.5L519.5 186.5M527.5 180.5L524.5 183.5L527.5 186.5M535.5 180.5L532.5 183.5L535.5 186.5M543.5 180.5L540.5 183.5L543.5 186.5M551.5 180.5L548.5 183.5L551.5 186.5M559.5 180.5L556.5 183.5L559.5 186.5M567.5 180.5L564.5 183.5L567.5 186.5M575.5 180.5L572.5 183.5L575.5 186.5M583.5 180.5L580.5 183.5L583.5 186.5M591.5 180.5L588.5 183.5L591.5 186.5M599.5 180.5L596.5 183.5L599.5 186.5M607.5 180.5L604.5 183.5L607.5 186.5M615.5 180.5L612.5 183.5L615.5 186.5M623.5 180.5L620.5 183.5L623.5 186.5M631.5 180.5L628.5 183.5L631.5 186.5M639.5 180.5L636.5 183.5L639.5 186.5M647.5 180.5L644.5 183.5L647.5 186.5M655.5 180.5L652.5 183.5L655.5 186.5M663.5 180.5L660.5 183.5L663.5 186.5M671.5 180.5L668.5 183.5L671.5 186.5M679.5 180.5L676.5 183.5L679.5 186.5M687.5 180.5L684.5 183.5L687.5 186.5M695.5 180.5L692.5 183.5L695.5 186.5M703.5 180.5L700.5 183.5L703.5 186.5M711.5 180.5L708.5 183.5L711.5 186.5M719.5 180.5L716.5 183.5L719.5 186.5M727.5 180.5L724.5 183.5L727.5 186.5M735.5 180.5L732.5 183.5L735.5 186.5M743.5 180.5L740.5 183.5L743.5 186.5M751.5 180.5L748.5 183.5L751.5 186.5M759.5 180.5L756.5 183.5L759.5 186.5M767.5 180.5L764.5 183.5L767.5 186.5M775.5 180.5L772.5 183.5L775.5 186.5M783.5 180.5L780.5 183.5L783.5 186.5M791.5 180.5L788.5 183.5L791.5 186.5M799.5 180.5L796.5 183.5L799.5 186.5M807.5 180.5L804.5 183.5L807.5 186.5M815.5 180.5L812.5 183.5L815.5 186.5M823.5 180.5L820.5 183.5L823.5 186.5M831.5 180.5L828.5 183.5L831.5 186.5M839.5 180.5L836.5 183.5L839.5 186.5M847.5 180.5L844.5 183.5L847.5 186.5M855.5 180.5L852.5 183.5L855.5 186.5M863.5 180.5L860.5 183.5L863.5 186.5M871.5 180.5L868.5 183.5L871.5 186.5M879.5 180.5L876.5 183.5L879.5 186.5M887.5 180.5L884.5 183.5L887.5 186.5M895.5 180.5L892.5 183.5L895.5 186.5M903.5 180.5L900.5 183.5L903.5 186.5M911.5 180.5L908.5 183.5L911.5 186.5M919.5 180.5L916.5 183.5L919.5 186.5M927.5 180.5L924.5 183.5L927.5 186.5M935.5 180.5L932.5 183.5L935.5 186.5M943.5 180.5L940.5 183.5L943.5 186.5" stroke="#0c0c78"/></svg>
<div class="t m" style="left:490.70px;top:195px;transform:scaleX(0.9976)">RefSeq genes from NCBI</div>
<div class="t" style="left:59.84px;top:207px;transform:scaleX(0.9192);color:#0c0c78">RefSeq Curated</div>
<div class="b" style="left:157px;top:214px;width:793px;height:1px;background:#0c0c78"></div>
<div class="t m" style="left:444.91px;top:226px;transform:scaleX(0.9849)">Publications: Sequences in Scientific Articles</div>
<div class="t" style="left:86.81px;top:238px;transform:scaleX(0.9229)">Sequences</div>
<div class="t" style="left:117.80px;top:254px;transform:scaleX(0.9410)">SNPs</div>
<div class="b" style="left:156px;top:285px;width:793px;height:15px;background:#bebebe"></div>
<div class="t" style="left:367.78px;top:271px;transform:scaleX(0.9320);color:#006400">OMIM Gene Phenotypes - Dark Green Can Be Disease-causing</div>
<div class="t" style="left:73.58px;top:285px;transform:scaleX(0.9358);color:#006400">OMIM Genes</div>
<div class="t m" style="left:435.90px;top:304px;transform:scaleX(0.9957)">Short Genetic Variants from dbSNP release 155</div>
<div class="t" style="left:25.85px;top:316px;transform:scaleX(0.9211)">Common dbSNP(155)</div>
<div class="t" style="left:265.84px;top:333px;transform:scaleX(0.9373)">Gene Expression in 54 tissues from GTEx RNA-seq of 17382 samples, 948 donors (V8, Aug 2019)</div>
<div class="b" style="left:156px;top:348px;width:378px;height:89px;background:#fff;box-shadow:inset 0 0 0 1px #f2f2f2"></div>
<div class="b" style="left:156px;top:364px;width:5px;height:72px;background:#ffa54f"></div>
<div class="b" style="left:163px;top:373px;width:5px;height:63px;background:#ee9a00"></div>
<div class="b" style="left:170px;top:381px;width:5px;height:55px;background:#8fbc8f"></div>
<div class="b" style="left:177px;top:351px;width:5px;height:85px;background:#8b1c62"></div>
<div class="b" style="left:184px;top:356px;width:5px;height:80px;background:#ee6a50"></div>
<div class="b" style="left:191px;top:348px;width:5px;height:88px;background:#ff0000"></div>
<div class="b" style="left:198px;top:363px;width:5px;height:73px;background:#cdb79e"></div>
<div class="b" style="left:205px;top:402px;width:5px;height:34px;background:#eeee00"></div>
<div class="b" style="left:212px;top:403px;width:5px;height:33px;background:#eeee00"></div>
<div class="b" style="left:219px;top:399px;width:5px;height:37px;background:#eeee00"></div>
<div class="b" style="left:226px;top:411px;width:5px;height:25px;background:#eeee00"></div>
<div class="b" style="left:233px;top:406px;width:5px;height:30px;background:#eeee00"></div>
<div class="b" style="left:240px;top:400px;width:5px;height:36px;background:#eeee00"></div>
<div class="b" style="left:247px;top:403px;width:5px;height:33px;background:#eeee00"></div>
<div class="b" style="left:254px;top:400px;width:5px;height:36px;background:#eeee00"></div>
<div class="b" style="left:261px;top:400px;width:5px;height:36px;background:#eeee00"></div>
<div class="b" style="left:268px;top:402px;width:5px;height:34px;background:#eeee00"></div>
<div class="b" style="left:275px;top:399px;width:5px;height:37px;background:#eeee00"></div>
<div class="b" style="left:282px;top:384px;width:5px;height:52px;background:#eeee00"></div>
<div class="b" style="left:289px;top:393px;width:5px;height:43px;background:#eeee00"></div>
<div class="b" style="left:296px;top:372px;width:5px;height:64px;background:#00cdcd"></div>
<div class="b" style="left:303px;top:429px;width:5px;height:7px;background:#ee82ee"></div>
<div class="b" style="left:310px;top:387px;width:5px;height:49px;background:#9ac0cd"></div>
<div class="b" style="left:317px;top:369px;width:5px;height:67px;background:#eed5d2"></div>
<div class="b" style="left:324px;top:370px;width:5px;height:66px;background:#eed5d2"></div>
<div class="b" style="left:331px;top:354px;width:5px;height:82px;background:#cdb79e"></div>
<div class="b" style="left:338px;top:370px;width:5px;height:66px;background:#eec591"></div>
<div class="b" style="left:345px;top:356px;width:5px;height:80px;background:#8b7355"></div>
<div class="b" style="left:352px;top:386px;width:5px;height:50px;background:#8b7355"></div>
<div class="b" style="left:359px;top:356px;width:5px;height:80px;background:#cdaa7d"></div>
<div class="b" style="left:366px;top:364px;width:5px;height:72px;background:#eed5d2"></div>
<div class="b" style="left:373px;top:378px;width:5px;height:58px;background:#b452cd"></div>
<div class="b" style="left:380px;top:377px;width:5px;height:59px;background:#7a378b"></div>
<div class="b" style="left:387px;top:387px;width:5px;height:49px;background:#cdb79e"></div>
<div class="b" style="left:394px;top:384px;width:5px;height:52px;background:#cdb79e"></div>
<div class="b" style="left:401px;top:397px;width:5px;height:39px;background:#cdb79e"></div>
<div class="b" style="left:408px;top:368px;width:5px;height:68px;background:#9acd32"></div>
<div class="b" style="left:415px;top:383px;width:5px;height:53px;background:#cdb79e"></div>
<div class="b" style="left:422px;top:377px;width:5px;height:59px;background:#7a67ee"></div>
<div class="b" style="left:429px;top:366px;width:5px;height:70px;background:#ffd700"></div>
<div class="b" style="left:436px;top:372px;width:5px;height:64px;background:#ffb6c1"></div>
<div class="b" style="left:443px;top:392px;width:5px;height:44px;background:#cd9b1d"></div>
<div class="b" style="left:450px;top:397px;width:5px;height:39px;background:#b4eeb4"></div>
<div class="b" style="left:457px;top:369px;width:5px;height:67px;background:#d9d9d9"></div>
<div class="b" style="left:464px;top:388px;width:5px;height:48px;background:#3a5fcd"></div>
<div class="b" style="left:471px;top:383px;width:5px;height:53px;background:#1e90ff"></div>
<div class="b" style="left:478px;top:386px;width:5px;height:50px;background:#cdb79e"></div>
<div class="b" style="left:485px;top:381px;width:5px;height:55px;background:#cdb79e"></div>
<div class="b" style="left:492px;top:386px;width:5px;height:50px;background:#ffd39b"></div>
<div class="b" style="left:499px;top:388px;width:5px;height:48px;background:#a6a6a6"></div>
<div class="b" style="left:506px;top:374px;width:5px;height:62px;background:#008b45"></div>
<div class="b" style="left:513px;top:361px;width:5px;height:75px;background:#eed5d2"></div>
<div class="b" style="left:520px;top:376px;width:5px;height:60px;background:#eed5d2"></div>
<div class="b" style="left:527px;top:408px;width:5px;height:28px;background:#ff00ff"></div>
<div class="b" style="left:156px;top:437px;width:793px;height:2px;background:#00006e"></div>
<div class="t" style="left:118.62px;top:387px;transform:scaleX(0.9026)">TNS1</div>
<div class="t" style="left:280.73px;top:442px;transform:scaleX(0.9353)">H3K27Ac Mark (Often Found Near Active Regulatory Elements) on 7 cell lines from ENCODE</div>
<div class="t" style="left:13.15px;top:456px;transform:scaleX(0.9170)">Layered H3K27Ac</div>
<div class="b" style="left:156px;top:481px;width:793px;height:2px;background:#6eecc8"></div>
<div class="b" style="left:156px;top:483px;width:793px;height:2px;background:#7d73af"></div>
<div class="b" style="left:156px;top:485px;width:793px;height:1px;background:#140850"></div>
<div class="t" style="left:405.51px;top:488px;transform:scaleX(0.9313);color:#3c3c8c">100 vertebrates Basewise Conservation by PhyloP</div>
<div class="t n" style="left:115.95px;top:488px;transform:scaleX(1.0127);color:#3c3c8c">4.88</div>
<div class="t n" style="left:144.80px;top:487px;transform:scaleX(1.0168);color:#3c3c8c">_</div>
<div class="t" style="left:13.31px;top:512px;transform:scaleX(0.9303);color:#3c3c8c">100 Vert. Cons</div>
<div class="t n" style="left:118.71px;top:538px;transform:scaleX(1.0293);color:#8c2828">-4.5</div>
<div class="t n" style="left:144.80px;top:537px;transform:scaleX(1.0168);color:#8c2828">_</div>
<svg class="b" style="left:0;top:0" width="950" height="749" viewBox="0 0 950 749" font-family='"Liberation Sans", sans-serif' font-size="10" stroke-width="0.14"><text transform="translate(343.69 527.38) scale(6.587 1.271)" fill="#0000ff" stroke="#0000ff">G</text><text transform="translate(405.88 528.00) scale(6.183 2.907)" fill="#ff0000" stroke="#ff0000">A</text><text transform="translate(465.71 527.77) scale(6.474 2.401)" fill="#999900" stroke="#999900">C</text><text transform="translate(526.71 527.38) scale(6.474 1.271)" fill="#999900" stroke="#999900">C</text><text transform="translate(589.38 527.50) scale(6.108 1.235)" fill="#ff0000" stroke="#ff0000">A</text><text transform="translate(648.71 527.77) scale(6.474 2.401)" fill="#999900" stroke="#999900">C</text><text transform="translate(711.38 528.00) scale(6.108 2.980)" fill="#ff0000" stroke="#ff0000">A</text><text transform="translate(772.38 527.50) scale(6.108 1.890)" fill="#ff0000" stroke="#ff0000">A</text><text transform="translate(831.65 527.71) scale(6.663 2.966)" fill="#0000ff" stroke="#0000ff">G</text><text transform="translate(894.88 527.50) scale(6.032 1.308)" fill="#ff0000" stroke="#ff0000">A</text><text transform="translate(223.89 529.80) scale(5.882 0.305)" fill="#ff0000">A</text><text transform="translate(222.23 531.97) scale(6.510 0.282)" fill="#0000ff">G</text><text transform="translate(283.76 526.98) scale(6.434 0.212)" fill="#0000ff">G</text></svg>
<div class="t" style="left:444.72px;top:554px;transform:scaleX(0.9447);color:#0c0c78">Multiz Alignments of 100 Vertebrates</div>
<div class="t" style="left:120.96px;top:568px;transform:scaleX(0.9116);color:#e08000">Gaps</div>
<div class="t" style="left:110.45px;top:583px;transform:scaleX(0.9170);color:#0c0c78">Human</div>
<div class="t" style="left:179.56px;top:583px;transform:scaleX(0.9800);color:#0c0c78">C</div>
<div class="t" style="left:240.43px;top:583px;transform:scaleX(0.9800);color:#0c0c78">G</div>
<div class="t" style="left:301.43px;top:583px;transform:scaleX(0.9800);color:#0c0c78">G</div>
<div class="t" style="left:362.43px;top:583px;transform:scaleX(0.9800);color:#0c0c78">G</div>
<div class="t" style="left:424.44px;top:583px;transform:scaleX(0.8900);color:#0c0c78">A</div>
<div class="t" style="left:484.56px;top:583px;transform:scaleX(0.9800);color:#0c0c78">C</div>
<div class="t" style="left:545.56px;top:583px;transform:scaleX(0.9800);color:#0c0c78">C</div>
<div class="t" style="left:607.44px;top:583px;transform:scaleX(0.8900);color:#0c0c78">A</div>
<div class="t" style="left:667.56px;top:583px;transform:scaleX(0.9800);color:#0c0c78">C</div>
<div class="t" style="left:729.44px;top:583px;transform:scaleX(0.8900);color:#0c0c78">A</div>
<div class="t" style="left:790.44px;top:583px;transform:scaleX(0.8900);color:#0c0c78">A</div>
<div class="t" style="left:850.43px;top:583px;transform:scaleX(0.9800);color:#0c0c78">G</div>
<div class="t" style="left:912.44px;top:583px;transform:scaleX(0.8900);color:#0c0c78">A</div>
<div class="t" style="left:107.23px;top:598px;transform:scaleX(0.9320);color:#0c0c78">Rhesus</div>
<div class="t" style="left:180.58px;top:598px;transform:scaleX(0.9400);color:#9696b4">T</div>
<div class="t" style="left:240.43px;top:598px;transform:scaleX(0.9800);color:#0c0c78">G</div>
<div class="t" style="left:301.43px;top:598px;transform:scaleX(0.9800);color:#0c0c78">G</div>
<div class="t" style="left:362.43px;top:598px;transform:scaleX(0.9800);color:#0c0c78">G</div>
<div class="t" style="left:424.44px;top:598px;transform:scaleX(0.8900);color:#0c0c78">A</div>
<div class="t" style="left:484.56px;top:598px;transform:scaleX(0.9800);color:#0c0c78">C</div>
<div class="t" style="left:545.56px;top:598px;transform:scaleX(0.9800);color:#0c0c78">C</div>
<div class="t" style="left:607.44px;top:598px;transform:scaleX(0.8900);color:#0c0c78">A</div>
<div class="t" style="left:667.56px;top:598px;transform:scaleX(0.9800);color:#0c0c78">C</div>
<div class="t" style="left:729.44px;top:598px;transform:scaleX(0.8900);color:#0c0c78">A</div>
<div class="t" style="left:790.44px;top:598px;transform:scaleX(0.8900);color:#0c0c78">A</div>
<div class="t" style="left:850.43px;top:598px;transform:scaleX(0.9800);color:#0c0c78">G</div>
<div class="t" style="left:912.44px;top:598px;transform:scaleX(0.8900);color:#0c0c78">A</div>
<div class="t" style="left:112.64px;top:613px;transform:scaleX(0.9267);color:#006400">Mouse</div>
<div class="t" style="left:179.56px;top:613px;transform:scaleX(0.9800);color:#0c0c78">C</div>
<div class="t" style="left:241.44px;top:613px;transform:scaleX(0.8900);color:#9696b4">A</div>
<div class="t" style="left:301.43px;top:613px;transform:scaleX(0.9800);color:#0c0c78">G</div>
<div class="t" style="left:362.43px;top:613px;transform:scaleX(0.9800);color:#0c0c78">G</div>
<div class="t" style="left:424.44px;top:613px;transform:scaleX(0.8900);color:#0c0c78">A</div>
<div class="t" style="left:484.56px;top:613px;transform:scaleX(0.9800);color:#0c0c78">C</div>
<div class="t" style="left:545.56px;top:613px;transform:scaleX(0.9800);color:#0c0c78">C</div>
<div class="t" style="left:607.44px;top:613px;transform:scaleX(0.8900);color:#0c0c78">A</div>
<div class="t" style="left:667.56px;top:613px;transform:scaleX(0.9800);color:#0c0c78">C</div>
<div class="t" style="left:729.44px;top:613px;transform:scaleX(0.8900);color:#0c0c78">A</div>
<div class="t" style="left:790.44px;top:613px;transform:scaleX(0.8900);color:#0c0c78">A</div>
<div class="t" style="left:850.43px;top:613px;transform:scaleX(0.9800);color:#0c0c78">G</div>
<div class="t" style="left:912.44px;top:613px;transform:scaleX(0.8900);color:#0c0c78">A</div>
<div class="t" style="left:129.08px;top:628px;transform:scaleX(0.8844);color:#0c0c78">Dog</div>
<div class="t" style="left:179.56px;top:628px;transform:scaleX(0.9800);color:#0c0c78">C</div>
<div class="t" style="left:241.44px;top:628px;transform:scaleX(0.8900);color:#9696b4">A</div>
<div class="t" style="left:301.43px;top:628px;transform:scaleX(0.9800);color:#0c0c78">G</div>
<div class="t" style="left:362.43px;top:628px;transform:scaleX(0.9800);color:#0c0c78">G</div>
<div class="t" style="left:424.44px;top:628px;transform:scaleX(0.8900);color:#0c0c78">A</div>
<div class="t" style="left:484.56px;top:628px;transform:scaleX(0.9800);color:#0c0c78">C</div>
<div class="t" style="left:545.56px;top:628px;transform:scaleX(0.9800);color:#0c0c78">C</div>
<div class="t" style="left:607.44px;top:628px;transform:scaleX(0.8900);color:#0c0c78">A</div>
<div class="t" style="left:667.56px;top:628px;transform:scaleX(0.9800);color:#0c0c78">C</div>
<div class="t" style="left:729.44px;top:628px;transform:scaleX(0.8900);color:#0c0c78">A</div>
<div class="t" style="left:790.44px;top:628px;transform:scaleX(0.8900);color:#0c0c78">A</div>
<div class="t" style="left:850.43px;top:628px;transform:scaleX(0.9800);color:#0c0c78">G</div>
<div class="t" style="left:912.44px;top:628px;transform:scaleX(0.8900);color:#0c0c78">A</div>
<div class="t" style="left:100.65px;top:643px;transform:scaleX(0.9127);color:#006400">Elephant</div>
<div class="t" style="left:180.58px;top:643px;transform:scaleX(0.9400);color:#9696b4">T</div>
<div class="t" style="left:240.43px;top:643px;transform:scaleX(0.9800);color:#0c0c78">G</div>
<div class="t" style="left:301.43px;top:643px;transform:scaleX(0.9800);color:#0c0c78">G</div>
<div class="t" style="left:362.43px;top:643px;transform:scaleX(0.9800);color:#0c0c78">G</div>
<div class="t" style="left:424.44px;top:643px;transform:scaleX(0.8900);color:#0c0c78">A</div>
<div class="t" style="left:484.56px;top:643px;transform:scaleX(0.9800);color:#0c0c78">C</div>
<div class="t" style="left:545.56px;top:643px;transform:scaleX(0.9800);color:#0c0c78">C</div>
<div class="t" style="left:607.44px;top:643px;transform:scaleX(0.8900);color:#0c0c78">A</div>
<div class="t" style="left:667.56px;top:643px;transform:scaleX(0.9800);color:#0c0c78">C</div>
<div class="t" style="left:729.44px;top:643px;transform:scaleX(0.8900);color:#0c0c78">A</div>
<div class="t" style="left:790.44px;top:643px;transform:scaleX(0.8900);color:#0c0c78">A</div>
<div class="t" style="left:850.43px;top:643px;transform:scaleX(0.9800);color:#0c0c78">G</div>
<div class="t" style="left:912.44px;top:643px;transform:scaleX(0.8900);color:#0c0c78">A</div>
<div class="t" style="left:105.14px;top:658px;transform:scaleX(0.9232);color:#006400">Chicken</div>
<div class="t e" style="left:180.64px;top:661px;transform:scaleX(1.1300);color:#9696b4">=</div>
<div class="t e" style="left:241.64px;top:661px;transform:scaleX(1.1300);color:#9696b4">=</div>
<div class="t e" style="left:302.64px;top:661px;transform:scaleX(1.1300);color:#9696b4">=</div>
<div class="t e" style="left:363.64px;top:661px;transform:scaleX(1.1300);color:#9696b4">=</div>
<div class="t e" style="left:424.64px;top:661px;transform:scaleX(1.1300);color:#9696b4">=</div>
<div class="t e" style="left:485.64px;top:661px;transform:scaleX(1.1300);color:#9696b4">=</div>
<div class="t e" style="left:546.64px;top:661px;transform:scaleX(1.1300);color:#9696b4">=</div>
<div class="t e" style="left:607.64px;top:661px;transform:scaleX(1.1300);color:#9696b4">=</div>
<div class="t e" style="left:668.64px;top:661px;transform:scaleX(1.1300);color:#9696b4">=</div>
<div class="t e" style="left:729.64px;top:661px;transform:scaleX(1.1300);color:#9696b4">=</div>
<div class="t e" style="left:790.64px;top:661px;transform:scaleX(1.1300);color:#9696b4">=</div>
<div class="t e" style="left:851.64px;top:661px;transform:scaleX(1.1300);color:#9696b4">=</div>
<div class="t e" style="left:912.64px;top:661px;transform:scaleX(1.1300);color:#9696b4">=</div>
<div class="t" style="left:84.31px;top:673px;transform:scaleX(0.9281);color:#0c0c78">X_tropicalis</div>
<div class="t e" style="left:180.64px;top:676px;transform:scaleX(1.1300);color:#9696b4">=</div>
<div class="t e" style="left:241.64px;top:676px;transform:scaleX(1.1300);color:#9696b4">=</div>
<div class="t e" style="left:302.64px;top:676px;transform:scaleX(1.1300);color:#9696b4">=</div>
<div class="t e" style="left:363.64px;top:676px;transform:scaleX(1.1300);color:#9696b4">=</div>
<div class="t e" style="left:424.64px;top:676px;transform:scaleX(1.1300);color:#9696b4">=</div>
<div class="t e" style="left:485.64px;top:676px;transform:scaleX(1.1300);color:#9696b4">=</div>
<div class="t e" style="left:546.64px;top:676px;transform:scaleX(1.1300);color:#9696b4">=</div>
<div class="t e" style="left:607.64px;top:676px;transform:scaleX(1.1300);color:#9696b4">=</div>
<div class="t e" style="left:668.64px;top:676px;transform:scaleX(1.1300);color:#9696b4">=</div>
<div class="t e" style="left:729.64px;top:676px;transform:scaleX(1.1300);color:#9696b4">=</div>
<div class="t e" style="left:790.64px;top:676px;transform:scaleX(1.1300);color:#9696b4">=</div>
<div class="t e" style="left:851.64px;top:676px;transform:scaleX(1.1300);color:#9696b4">=</div>
<div class="t e" style="left:912.64px;top:676px;transform:scaleX(1.1300);color:#9696b4">=</div>
<div class="t" style="left:98.09px;top:688px;transform:scaleX(0.9210);color:#006400">Zebrafish</div>
<div class="t e" style="left:180.64px;top:691px;transform:scaleX(1.1300);color:#9696b4">=</div>
<div class="t e" style="left:241.64px;top:691px;transform:scaleX(1.1300);color:#9696b4">=</div>
<div class="t e" style="left:302.64px;top:691px;transform:scaleX(1.1300);color:#9696b4">=</div>
<div class="t e" style="left:363.64px;top:691px;transform:scaleX(1.1300);color:#9696b4">=</div>
<div class="t e" style="left:424.64px;top:691px;transform:scaleX(1.1300);color:#9696b4">=</div>
<div class="t e" style="left:485.64px;top:691px;transform:scaleX(1.1300);color:#9696b4">=</div>
<div class="t e" style="left:546.64px;top:691px;transform:scaleX(1.1300);color:#9696b4">=</div>
<div class="t e" style="left:607.64px;top:691px;transform:scaleX(1.1300);color:#9696b4">=</div>
<div class="t e" style="left:668.64px;top:691px;transform:scaleX(1.1300);color:#9696b4">=</div>
<div class="t e" style="left:729.64px;top:691px;transform:scaleX(1.1300);color:#9696b4">=</div>
<div class="t e" style="left:790.64px;top:691px;transform:scaleX(1.1300);color:#9696b4">=</div>
<div class="t e" style="left:851.64px;top:691px;transform:scaleX(1.1300);color:#9696b4">=</div>
<div class="t e" style="left:912.64px;top:691px;transform:scaleX(1.1300);color:#9696b4">=</div>
<div class="t" style="left:440.73px;top:704px;transform:scaleX(0.9299)">Repeating Elements by RepeatMasker</div>
<div class="t" style="left:67.75px;top:718px;transform:scaleX(0.9168)">RepeatMasker</div>
</div></body></html>
